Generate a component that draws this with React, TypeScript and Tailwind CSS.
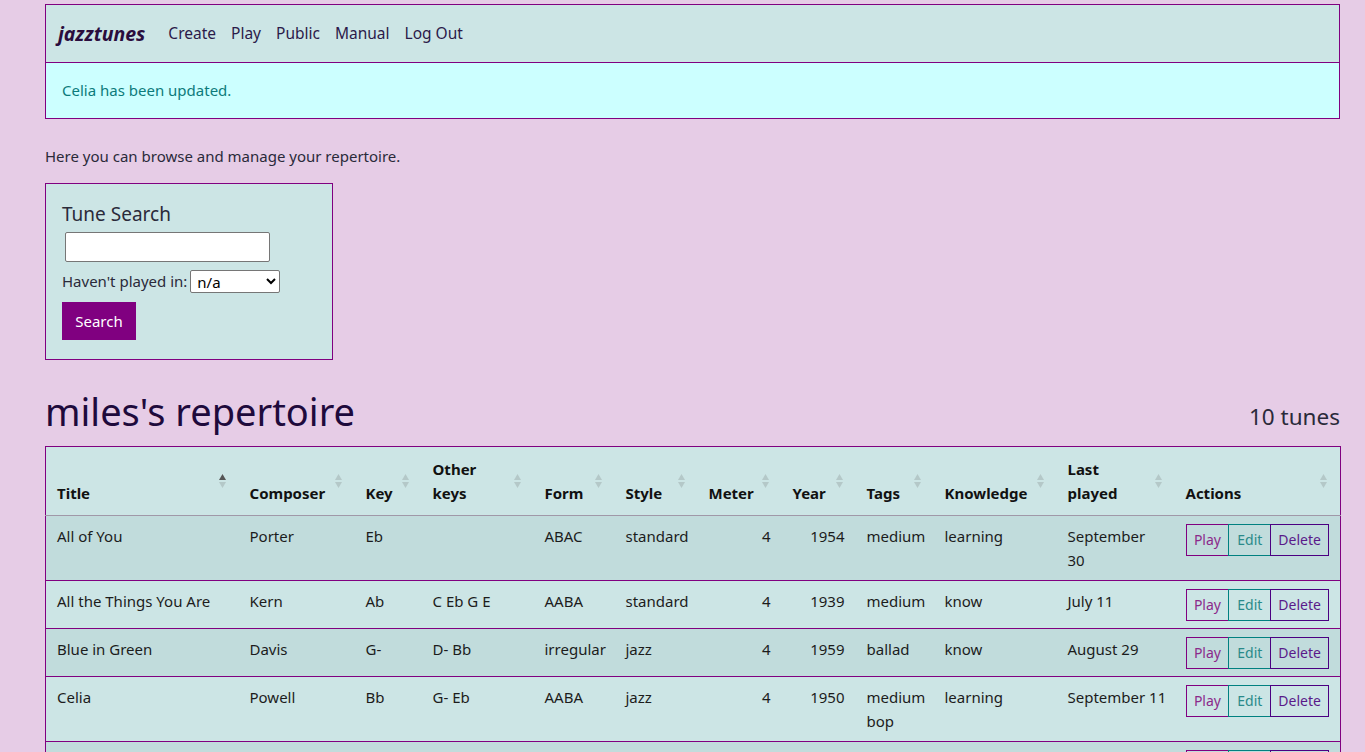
import React from "react";

const FONT = { fontFamily: '"Noto Sans", "Open Sans", sans-serif' };

type Tune = {
  title: string;
  composer: string;
  key: string;
  other: string;
  form: string;
  style: string;
  meter: string;
  year: string;
  tags: string;
  knowledge: string;
  last: string;
};

const tunes: Tune[] = [
  { title: "All of You", composer: "Porter", key: "Eb", other: "", form: "ABAC", style: "standard", meter: "4", year: "1954", tags: "medium", knowledge: "learning", last: "September\n30" },
  { title: "All the Things You Are", composer: "Kern", key: "Ab", other: "C Eb G E", form: "AABA", style: "standard", meter: "4", year: "1939", tags: "medium", knowledge: "know", last: "July 11" },
  { title: "Blue in Green", composer: "Davis", key: "G-", other: "D- Bb", form: "irregular", style: "jazz", meter: "4", year: "1959", tags: "ballad", knowledge: "know", last: "August 29" },
  { title: "Celia", composer: "Powell", key: "Bb", other: "G- Eb", form: "AABA", style: "jazz", meter: "4", year: "1950", tags: "medium bop", knowledge: "learning", last: "September 11" },
  { title: "Giant Steps", composer: "Coltrane", key: "B", other: "G Eb", form: "AB", style: "jazz", meter: "4", year: "1959", tags: "fast", knowledge: "learning", last: "August 2" },
  { title: "Footprints", composer: "Shorter", key: "C-", other: "", form: "blues", style: "jazz", meter: "3", year: "1966", tags: "medium", knowledge: "know", last: "June 14" },
  { title: "Oleo", composer: "Rollins", key: "Bb", other: "", form: "AABA", style: "jazz", meter: "4", year: "1954", tags: "fast", knowledge: "know", last: "May 3" },
  { title: "Solar", composer: "Davis", key: "C-", other: "", form: "irregular", style: "jazz", meter: "4", year: "1954", tags: "medium", knowledge: "know", last: "July 20" },
  { title: "Stella by Starlight", composer: "Young", key: "Bb", other: "", form: "ABCA", style: "standard", meter: "4", year: "1944", tags: "medium", knowledge: "learning", last: "August 14" },
  { title: "Yardbird Suite", composer: "Parker", key: "C", other: "", form: "AABA", style: "jazz", meter: "4", year: "1946", tags: "medium bop", knowledge: "know", last: "September 1" },
];

function SortArrows({ active }: { active?: boolean }) {
  return (
    <svg
      width="9"
      height="16"
      viewBox="0 0 9 16"
      className="absolute right-[12px] top-1/2 -translate-y-1/2"
    >
      <path d="M4.5 1 L8 7 L1 7 Z" fill={active ? "#555555" : "#b4c8c8"} />
      <path d="M4.5 15 L8 9 L1 9 Z" fill="#b4c8c8" />
    </svg>
  );
}

const headers: { label: React.ReactNode; w: string }[] = [
  { label: "Title", w: "w-[193px]" },
  { label: "Composer", w: "w-[116px]" },
  { label: "Key", w: "w-[67px]" },
  { label: <>Other<br />keys</>, w: "w-[112px]" },
  { label: "Form", w: "w-[81px]" },
  { label: "Style", w: "w-[83px]" },
  { label: "Meter", w: "w-[84px]" },
  { label: "Year", w: "w-[74px]" },
  { label: "Tags", w: "w-[78px]" },
  { label: "Knowledge", w: "w-[123px]" },
  { label: <>Last<br />played</>, w: "w-[118px]" },
  { label: "Actions", w: "w-[166px]" },
];

const td = "px-[11px] pt-[8px] pb-[8px] align-top leading-[24px]";

export default function App() {
  return (
    <div className="min-h-[752px] bg-[#e6cce6] text-[#222222]" style={FONT}>
      <div className="ml-[45px] w-[1295px] pt-[4px]">
        {/* Navbar */}
        <div className="border border-[#800080]">
          <div className="flex h-[57px] items-center bg-[#cce5e5] pl-[12px]">
            <span className="mr-[23px] text-[19.5px] font-bold italic text-[#2a0d3d]">jazztunes</span>
            <nav className="flex gap-[15px] text-[15.5px] text-[#2b1a4a]">
              <span>Create</span>
              <span>Play</span>
              <span>Public</span>
              <span>Manual</span>
              <span>Log Out</span>
            </nav>
          </div>
          <div className="flex h-[56px] items-center border-t border-[#800080] bg-[#ccffff] pl-[16px] text-[15px] text-[#0c7b7b]">
            Celia has been updated.
          </div>
        </div>

        <p className="mt-[25px] text-[15px] leading-[24px] text-[#2a2a3a]">
          Here you can browse and manage your repertoire.
        </p>

        {/* Search */}
        <div className="mt-[15px] w-[288px] border border-[#800080] bg-[#cce5e5] px-[16px] pb-[19px] pt-[17px]">
          <div className="text-[19px] leading-[26px] text-[#2a2a3a]">Tune Search</div>
          <input
            type="text"
            className="ml-[3px] mt-[5px] block h-[30px] w-[205px] rounded-[2px] border border-[#767676] bg-white"
          />
          <div className="mt-[8px] flex items-center text-[15px] text-[#2a2a3a]">
            <span>Haven't played in:</span>
            <select
              className="ml-[3px] h-[23px] w-[90px] rounded-[2px] border border-[#767676] bg-white pl-[2px] text-[15px] text-black"
              defaultValue="n/a"
            >
              <option>n/a</option>
            </select>
          </div>
          <button className="mt-[9px] block h-[38px] w-[74px] bg-[#800080] text-[15px] text-white">
            Search
          </button>
        </div>

        {/* Heading */}
        <div className="mt-[27px] flex items-end justify-between">
          <h1 className="text-[38px] leading-[48px] text-[#1e0a3c]">miles's repertoire</h1>
          <span className="mb-[2px] text-[22.5px] leading-[32px] text-[#2a2a3a]">10 tunes</span>
        </div>

        {/* Table */}
        <table className="mt-[11px] w-[1295px] table-fixed border-collapse border border-[#800080] text-[15px] text-[#1c1c1c]">
          <colgroup>
            {headers.map((h, i) => (
              <col key={i} className={h.w} />
            ))}
          </colgroup>
          <thead>
            <tr className="border-b border-b-[#a098a8] bg-[#cce5e5]">
              {headers.map((h, i) => (
                <th
                  key={i}
                  className="relative px-[11px] pb-[10px] pt-[10px] text-left align-bottom font-bold leading-[24px] text-[#111111]"
                >
                  {h.label}
                  <SortArrows active={i === 0} />
                </th>
              ))}
            </tr>
          </thead>
          <tbody>
            {tunes.map((t, i) => (
              <tr
                key={i}
                className={`border-t border-[#800080] ${i % 2 === 0 ? "bg-[#c1dcdc]" : "bg-[#cce5e5]"}`}
              >
                <td className={td}>{t.title}</td>
                <td className={td}>{t.composer}</td>
                <td className={td}>{t.key}</td>
                <td className={td}>{t.other}</td>
                <td className={td}>{t.form}</td>
                <td className={td}>{t.style}</td>
                <td className={`${td} text-right`}>{t.meter}</td>
                <td className={`${td} text-right`}>{t.year}</td>
                <td className={td}>{t.tags}</td>
                <td className={td}>{t.knowledge}</td>
                <td className="pb-[8px] pl-[11px] pr-0 pt-[8px] align-top leading-[24px]">
                  <span className="whitespace-pre">{t.last}</span>
                </td>
                <td className="px-[11px] pb-[7px] pt-[8px] align-top leading-[24px]">
                  <div className="flex h-[32px] text-[14px]">
                    <span className="flex w-[44px] items-center justify-center border border-[#800080] text-[#8b2a8b]">Play</span>
                    <span className="-ml-px flex w-[43px] items-center justify-center border border-[#008080] text-[#2a8a8a]">Edit</span>
                    <span className="-ml-px flex w-[59px] items-center justify-center border border-[#4b0082] text-[#5a1a8a]">Delete</span>
                  </div>
                </td>
              </tr>
            ))}
          </tbody>
        </table>
      </div>
    </div>
  );
}
